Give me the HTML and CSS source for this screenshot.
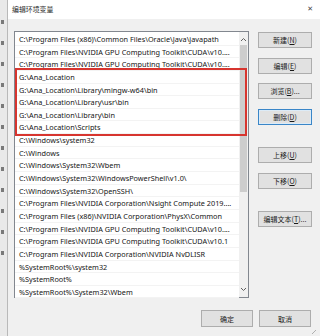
FILE: index.html
```html
<!DOCTYPE html>
<html lang="zh-CN">
<head>
    <meta charset="UTF-8">
    <title>编辑环境变量</title>
    <link rel="stylesheet" href="styles.css">
</head>
<body>
    <div class="screen">
        <!-- strip of the window behind the dialog -->
        <div class="behind">
            <span class="mark"></span><span class="mark"></span><span class="mark"></span>
            <span class="mark"></span><span class="mark"></span><span class="mark"></span>
            <span class="mark"></span><span class="mark"></span><span class="mark"></span>
            <span class="mark"></span><span class="mark"></span><span class="mark"></span>
        </div>

        <div class="dialog">
            <div class="titlebar">
                <span class="title">编辑环境变量</span>
                <span class="close">✕</span>
            </div>

            <div class="content">
                <div class="main">
                    <div class="listbox">
                        <ul class="rows">
                            <li>C:\Program Files (x86)\Common Files\Oracle\Java\javapath</li>
                            <li>C:\Program Files\NVIDIA GPU Computing Toolkit\CUDA\v10....</li>
                            <li>C:\Program Files\NVIDIA GPU Computing Toolkit\CUDA\v10....</li>
                            <li>G:\Ana_Location</li>
                            <li>G:\Ana_Location\Library\mingw-w64\bin</li>
                            <li>G:\Ana_Location\Library\usr\bin</li>
                            <li>G:\Ana_Location\Library\bin</li>
                            <li>G:\Ana_Location\Scripts</li>
                            <li>C:\Windows\system32</li>
                            <li>C:\Windows</li>
                            <li>C:\Windows\System32\Wbem</li>
                            <li>C:\Windows\System32\WindowsPowerShell\v1.0\</li>
                            <li>C:\Windows\System32\OpenSSH\</li>
                            <li>C:\Program Files\NVIDIA Corporation\Nsight Compute 2019....</li>
                            <li>C:\Program Files (x86)\NVIDIA Corporation\PhysX\Common</li>
                            <li>C:\Program Files\NVIDIA GPU Computing Toolkit\CUDA\v10....</li>
                            <li>C:\Program Files\NVIDIA GPU Computing Toolkit\CUDA\v10.1</li>
                            <li>C:\Program Files\NVIDIA Corporation\NVIDIA NvDLISR</li>
                            <li>%SystemRoot%\system32</li>
                            <li>%SystemRoot%</li>
                            <li>%SystemRoot%\System32\Wbem</li>
                        </ul>

                        <div class="scrollbar">
                            <svg class="arrow" width="7" height="5" viewBox="0 0 7 5"><path d="M1 4 L3.5 1.5 L6 4" fill="none" stroke="#606060" stroke-width="1"/></svg>
                            <div class="track"><div class="thumb"></div></div>
                            <svg class="arrow" width="7" height="5" viewBox="0 0 7 5"><path d="M1 1 L3.5 3.5 L6 1" fill="none" stroke="#606060" stroke-width="1"/></svg>
                        </div>

                        <!-- red annotation around the Anaconda entries -->
                        <div class="highlight"></div>
                    </div>

                    <div class="side">
                        <button class="btn">新建(<u>N</u>)</button>
                        <button class="btn">编辑(<u>E</u>)</button>
                        <button class="btn">浏览(<u>B</u>)...</button>
                        <button class="btn focused">删除(<u>D</u>)</button>
                        <button class="btn group">上移(<u>U</u>)</button>
                        <button class="btn">下移(<u>O</u>)</button>
                        <button class="btn group">编辑文本(<u>T</u>)...</button>
                    </div>
                </div>

                <div class="footer">
                    <button class="btn">确定</button>
                    <button class="btn">取消</button>
                </div>
            </div>
            <div class="grip"></div>
        </div>
    </div>
</body>
</html>
```

FILE: styles.css
```css
html, body {
    margin: 0;
    padding: 0;
}
body {
    width: 320px;
    height: 336px;
    overflow: hidden;
    background-color: #f0f0f0;
    font-family: "Noto Sans", "Noto Sans CJK SC", sans-serif;
    color: #151515;
}
.screen {
    display: flex;
    height: 336px;
}
.behind {
    width: 8px;
    flex-shrink: 0;
    background-color: #e9e9e9;
    border-right: 1px solid #b9b9b9;
    display: flex;
    flex-direction: column;
    gap: 17px;
    padding-top: 20px;
    box-sizing: border-box;
}
.mark {
    display: block;
    width: 3px;
    height: 4px;
    margin-left: 1px;
    background-color: #7a7a7a;
}
.dialog {
    flex: 1;
    display: flex;
    flex-direction: column;
    position: relative;
    background-color: #f0f0f0;
}
.titlebar {
    height: 17px;
    background-color: #fff;
    display: flex;
    align-items: center;
    justify-content: space-between;
    padding: 0 7px 2px 4px;
    flex-shrink: 0;
}
.title {
    font-family: "Noto Sans CJK SC", sans-serif;
    font-size: 6.9px;
    color: #2a2a2a;
}
.close {
    font-family: "DejaVu Sans", sans-serif;
    font-size: 7px;
    color: #444;
}
.content {
    padding: 12px 8px 0 6px;
}
.main {
    display: flex;
    gap: 9px;
}
.listbox {
    position: relative;
    width: 235px;
    height: 267px;
    flex-shrink: 0;
    box-sizing: border-box;
    border: 1px solid #82878f;
    background-color: #fff;
    display: flex;
}
.rows {
    list-style: none;
    margin: 0;
    padding: 1px 0 0 0;
    flex: 1;
    min-width: 0;
}
.rows li {
    height: 12.65px;
    line-height: 12px;
    box-sizing: border-box;
    padding-left: 4px;
    border-bottom: 1px solid #f3f3f3;
    font-size: 7.3px;
    white-space: nowrap;
    overflow: hidden;
}
.scrollbar {
    width: 9px;
    background-color: #f0f0f0;
    display: flex;
    flex-direction: column;
    align-items: center;
}
.arrow {
    margin: 5px 0 3px;
    flex-shrink: 0;
}
.scrollbar .arrow:last-child {
    margin: 3px 0 5px;
}
.track {
    flex: 1;
    width: 100%;
}
.thumb {
    height: 147px;
    margin: 0 1px;
    background-color: #cdcdcd;
}
.highlight {
    position: absolute;
    left: 0;
    top: 36px;
    width: 232px;
    height: 68px;
    box-sizing: border-box;
    border: 2px solid #d7352f;
}
.side {
    display: flex;
    flex-direction: column;
    gap: 9.5px;
    padding-top: 1px;
}
.btn {
    width: 54px;
    height: 16px;
    padding: 0;
    box-sizing: border-box;
    border: 1px solid #adadad;
    background-color: #e1e1e1;
    font-family: "Noto Sans CJK SC", sans-serif;
    font-size: 7px;
    color: #1a1a1a;
    line-height: 14px;
}
.btn u {
    text-underline-offset: 1px;
}
.btn.focused {
    border: 1px solid #3a86c8;
    box-shadow: inset 0 0 0 1px #dcebf7;
}
.btn.group {
    margin-top: 13px;
}
.footer {
    display: flex;
    justify-content: flex-end;
    gap: 6px;
    margin-top: 12px;
    padding-right: 1px;
}
.footer .btn {
    width: 52px;
    height: 17px;
}
.grip {
    position: absolute;
    right: 4px;
    bottom: 2px;
    width: 4px;
    height: 4px;
    background: linear-gradient(135deg, transparent 50%, #b0b0b0 50%, #b0b0b0 60%, transparent 60%);
}
```
